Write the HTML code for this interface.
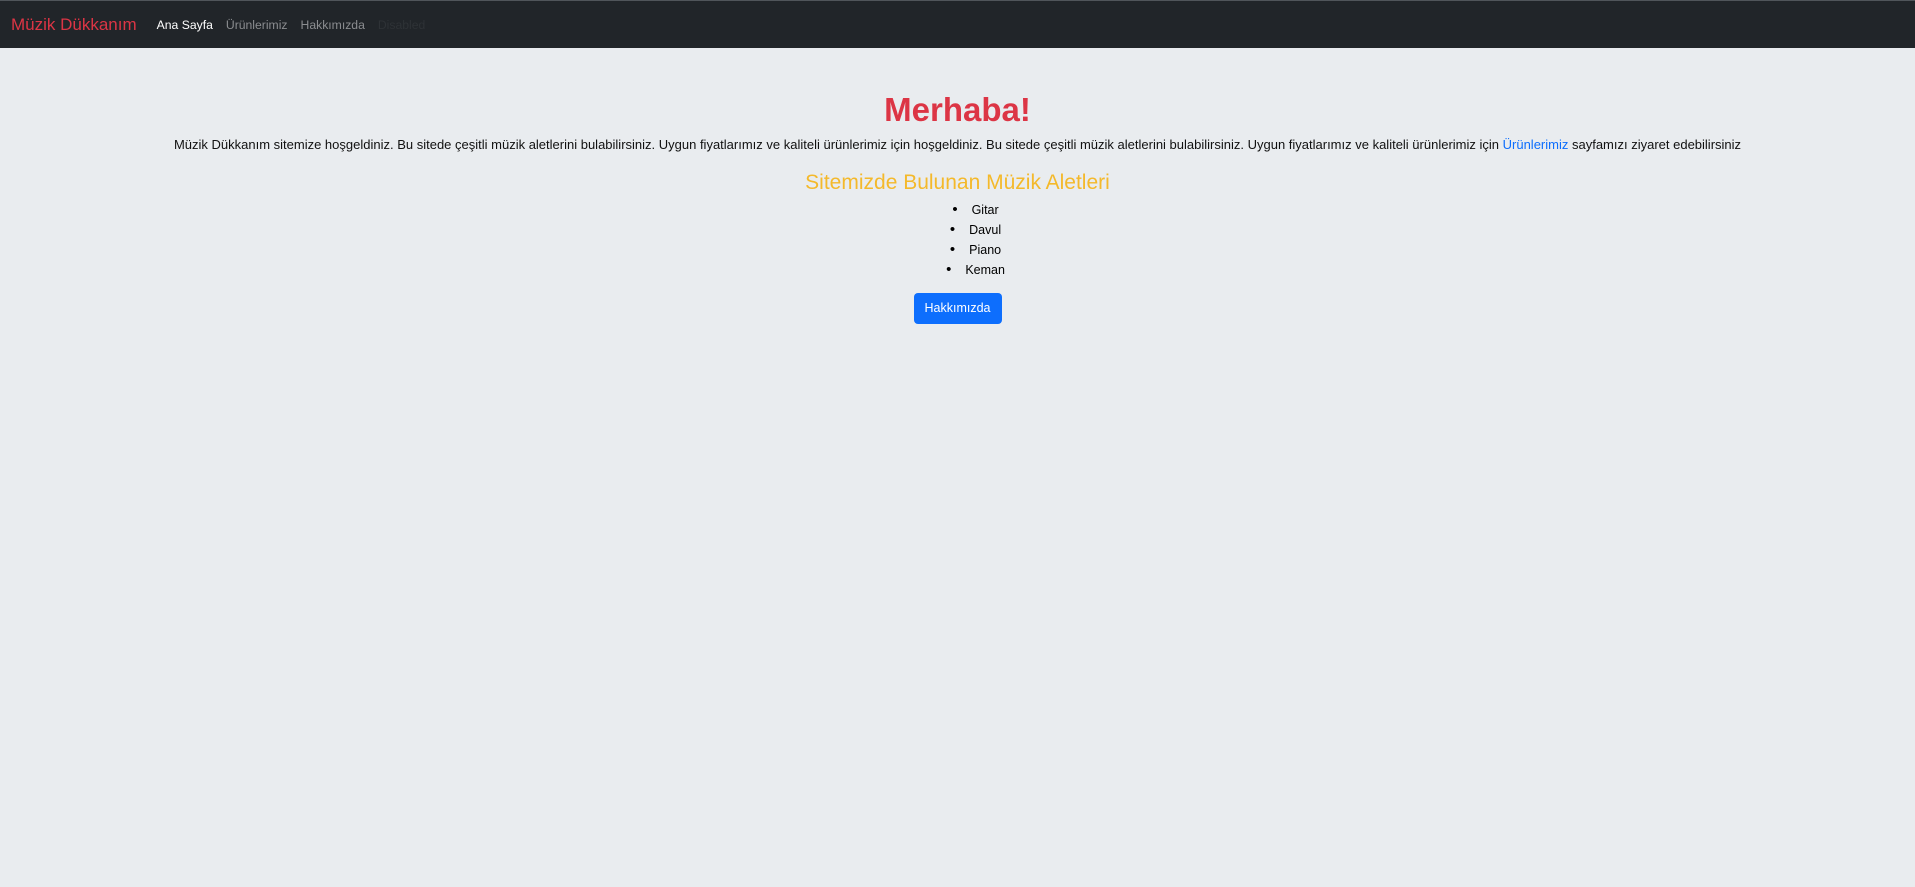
<!DOCTYPE html>
<html><head><meta charset="utf-8"><style>
body{margin:0;background:#e9ecef;font-family:"Liberation Sans",sans-serif;width:1915px;height:887px;overflow:hidden}
nav{height:47px;background:#212529;border-top:1px solid #50555a;display:flex;align-items:center}
.brand{color:#dc3545;font-size:17px;margin-left:11px;margin-right:20px}
nav a{font-size:12.2px;color:#8b8d90;margin-right:13px;text-decoration:none}
nav a.act{color:#fff}
nav a.dis{color:#2e3236}
.c{text-align:center}
h1{color:#dc3545;font-size:33px;margin:42px 0 3px;font-weight:bold;line-height:40px}
p{font-size:13px;margin:0;color:#111;line-height:20px;padding-top:2px}
p a{color:#0d6efd;text-decoration:none}
h2{color:#f4b92b;font-size:21px;font-weight:normal;margin:15px 0 4px;line-height:26px}
ul{margin:0;padding:0;list-style:none;font-size:12.5px;line-height:20px}
li::before{content:"•";margin-right:14px;font-size:15px}
.btn{display:inline-block;background:#0d6efd;color:#fff;font-size:12.5px;width:88px;height:31px;line-height:31px;border-radius:4px;margin-top:13px}
</style></head><body>
<nav><span class="brand">Müzik Dükkanım</span><a class="act">Ana Sayfa</a><a>Ürünlerimiz</a><a>Hakkımızda</a><a class="dis">Disabled</a></nav>
<div class="c">
<h1>Merhaba!</h1>
<p>Müzik Dükkanım sitemize hoşgeldiniz. Bu sitede çeşitli müzik aletlerini bulabilirsiniz. Uygun fiyatlarımız ve kaliteli ürünlerimiz için hoşgeldiniz. Bu sitede çeşitli müzik aletlerini bulabilirsiniz. Uygun fiyatlarımız ve kaliteli ürünlerimiz için <a>Ürünlerimiz</a> sayfamızı ziyaret edebilirsiniz</p>
<h2>Sitemizde Bulunan Müzik Aletleri</h2>
<ul style="margin-left:36px"><li>Gitar</li><li>Davul</li><li>Piano</li><li>Keman</li></ul>
<div class="btn">Hakkımızda</div>
</div>
</body></html>
